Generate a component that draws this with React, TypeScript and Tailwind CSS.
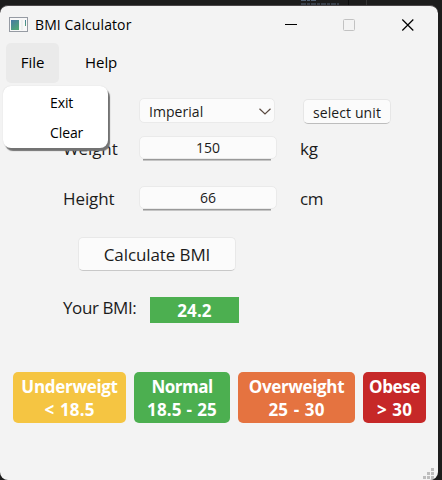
import type { ReactNode } from "react";

const categories = [
  { name: "Underweigt", range: "< 18.5", style: "w-[113px] bg-[#f5c542]", nameStyle: "tracking-[-0.3px]", rangeStyle: "tracking-[0.15px] [word-spacing:1px]" },
  { name: "Normal", range: "18.5 - 25", style: "w-24 bg-[#4caf50]", nameStyle: "tracking-[-0.5px]", rangeStyle: "tracking-[0.1px] [word-spacing:0.6px]" },
  { name: "Overweight", range: "25 - 30", style: "w-[117px] bg-[#e57340]", nameStyle: "tracking-[-0.35px]", rangeStyle: "tracking-[0.15px] [word-spacing:1px]" },
  { name: "Obese", range: "> 30", style: "w-[63px] bg-[#c62828]", nameStyle: "tracking-[-0.4px]", rangeStyle: "tracking-[0.15px] [word-spacing:1px]" },
];

function NumberField({ value }: { value: string }) {
  return (
    <div className="relative flex h-[23px] w-[138px] items-center justify-center rounded-[5px] border border-[#eaeaea] bg-[#fbfbfb] text-[14px] tracking-[-0.05px]">
      <span>{value}</span>
      <div className="absolute -bottom-[3px] left-[3px] h-[2px] w-[128px] border-b border-[#c4c4c4] bg-[#999999]" />
    </div>
  );
}

function FieldRow({ label, value, unit }: { label: ReactNode; value: string; unit: string }) {
  return (
    <div className="flex h-[25px] items-start pl-[63px] text-[17px] leading-[25px]">
      <span className="w-[76px] tracking-[-0.1px]">{label}</span>
      <NumberField value={value} />
      <span className="ml-[23px] tracking-[-0.3px]">{unit}</span>
    </div>
  );
}

function TitleBar() {
  return (
    <header className="flex h-[38px] items-center pl-[9px] text-[14px] text-black">
      <svg className="h-4 w-[19px]" viewBox="0 0 19 16">
        <defs>
          <linearGradient id="screen" x1="0" y1="0" x2="0.6" y2="1">
            <stop offset="0" stopColor="#4778a5" />
            <stop offset="1" stopColor="#4fa477" />
          </linearGradient>
        </defs>
        <rect x="0.5" y="0.5" width="18" height="14" fill="#f8f8f8" stroke="#969ba3" />
        <rect x="2" y="3" width="8" height="10" fill="url(#screen)" />
        <path d="M12 3h2v10h-2z" fill="#edf0ef" />
        <path d="M16 3h1v6h-1z" fill="url(#screen)" />
      </svg>
      <span className="ml-[7px] w-[245px] pb-[2px] tracking-[0.1px]">BMI Calculator</span>
      <svg className="-mt-px h-3 w-[135px]" viewBox="0 0 135 12" fill="none">
        <path d="M5 5.5h12" stroke="#000" />
        <rect x="63.5" y="0.5" width="11" height="11" rx="1" stroke="#c2c2c2" />
        <path d="M122.3 0.5l11 11m0-11l-11 11" stroke="#000" strokeWidth="1.2" />
      </svg>
    </header>
  );
}

export default function App() {
  return (
    <div className="relative h-[480px] w-[442px] overflow-hidden bg-[#1c1c1c] pt-[5px] font-['Open_Sans','Noto_Sans',sans-serif] text-[#1b1b1b]">
      <main className="h-[475px] w-[438px] rounded-[8px] border-t border-[#4a4648] bg-[#f3f3f3]">
        <TitleBar />
        <nav className="-mt-px flex h-10 pl-[6px] text-[15px] text-black">
          <div className="flex w-[53px] items-center justify-center rounded-[5px] bg-[#eaeaea] pb-[2px] tracking-[-0.05px]">File</div>
          <div className="ml-[26px] flex items-center pb-[2px] tracking-[-0.05px]">Help</div>
        </nav>

        <div className="mt-[15px] flex h-[26px] items-start pl-[139px]">
          <div className="flex h-[25px] w-[136px] items-center justify-between rounded-[5px] border border-[#eaeaea] bg-[#fbfbfb] pr-[3px] pl-[9px] text-[14px] tracking-[0.05px]">
            <span className="pt-[2px]">Imperial</span>
            <svg className="mt-px h-[7px] w-3" viewBox="0 0 12 7" fill="none" stroke="#5a4a40" strokeWidth="1.2">
              <path d="M.5 .7L6 5.9 11.5 .7" />
            </svg>
          </div>
          <button className="mt-px ml-7 flex h-[25px] w-[88px] items-center justify-center rounded-[5px] border border-[#e6e6e6] border-b-[#bdbdbd] bg-[#fbfbfb] pt-[2px] text-[14px] tracking-[0.1px]">
            select unit
          </button>
        </div>

        <div className="mt-3">
          <FieldRow label="Weight" value="150" unit="kg" />
        </div>
        <div className="mt-[25px]">
          <FieldRow label="Height" value="66" unit="cm" />
        </div>

        <button className="mt-[26px] ml-[78px] flex h-[34px] w-[158px] items-center justify-center rounded-[5px] border border-[#e8e8e8] border-b-[#c8c8c8] bg-[#fbfbfb] pt-[2px] text-[17px] tracking-[-0.1px]">
          Calculate BMI
        </button>

        <div className="mt-[26px] flex h-[26px] pl-[63px]">
          <span className="w-[87px] text-[17px] leading-[22px] tracking-[-0.4px]">Your BMI:</span>
          <div className="flex w-[89px] items-center justify-center bg-[#4caf50] pt-px text-[17px] font-bold tracking-[0.1px] text-white">24.2</div>
        </div>

        <div className="mt-[49px] flex gap-2 pl-[13px]">
          {categories.map((c) => (
            <div key={c.name} className={`flex h-[51px] flex-col items-center rounded-[5px] pt-[3px] text-[17px] leading-[23px] font-bold whitespace-nowrap text-white ${c.style}`}>
              <span className={c.nameStyle}>{c.name}</span>
              <span className={c.rangeStyle}>{c.range}</span>
            </div>
          ))}
        </div>
      </main>

      <div className="absolute top-[86px] left-[3px] h-[62px] w-[105px] rounded-[8px] bg-white pl-[47px] text-[14px] leading-[30px] tracking-[-0.1px] text-black shadow-[2px_3px_1px_#737373,0_0_1px_#cccccc]">
        <div className="mt-[2px]">Exit</div>
        <div>Clear</div>
      </div>

      <svg className="absolute right-[7px] bottom-0 h-3 w-3" viewBox="0 0 12 12" fill="#bdbdbd">
        <path d="M8 0h3v3h-3zM4 4h3v3h-3zM8 4h3v3h-3zM0 8h3v3h-3zM4 8h3v3h-3zM8 8h3v3h-3z" />
      </svg>
      <svg className="absolute top-0 left-[300px] h-[5px] w-[67px]" viewBox="0 0 67 5" fill="none">
        <path d="M1 .5h16M1 4h38" stroke="#526174" strokeDasharray="5 1 3 1" />
        <path d="M48.5 0v5" stroke="#0c0c0c" />
        <path d="M66.5 0v5" stroke="#343434" />
      </svg>
    </div>
  );
}
